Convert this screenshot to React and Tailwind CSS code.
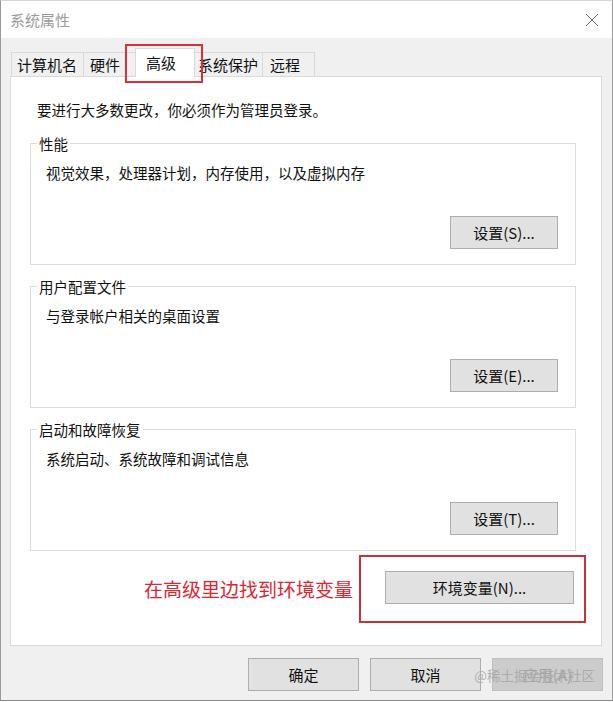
import React from 'react'

const tabs = [
  { label: '计算机名', w: 'w-[72px]', pl: 'pl-[5px]' },
  { label: '硬件', w: 'w-[54px]', pl: 'pl-[6px]' },
  { label: '高级', w: 'w-[60px]', pl: 'pl-[10px]', active: true },
  { label: '系统保护', w: 'w-[69px]', pl: 'pl-[4px]' },
  { label: '远程', w: 'w-[53px]', pl: 'pl-[7px]' },
]

const groups = [
  { title: '性能', text: '视觉效果，处理器计划，内存使用，以及虚拟内存', button: '设置(S)...' },
  { title: '用户配置文件', text: '与登录帐户相关的桌面设置', button: '设置(E)...' },
  { title: '启动和故障恢复', text: '系统启动、系统故障和调试信息', button: '设置(T)...' },
]

const WinButton = ({ children, className = '' }) => (
  <button className={`h-[33px] border border-[#adadad] bg-[#e1e1e1] text-[15px] text-[#111] leading-none ${className}`}>
    {children}
  </button>
)

const GroupBox = ({ title, text, button, className = '' }) => (
  <div className={`relative flex h-[122px] flex-col border border-[#dcdcdc] ${className}`}>
    <span className="absolute -top-[10px] left-[6px] bg-white px-[2px] text-[14.5px] leading-[20px] text-[#111]">
      {title}
    </span>
    <p className="pl-[15px] pt-[19px] text-[14.5px] leading-[20px] text-[#111]">{text}</p>
    <div className="flex-1" />
    <div className="flex justify-end pb-[15px] pr-[17px]">
      <WinButton className="w-[108px]">{button}</WinButton>
    </div>
  </div>
)

export default function App() {
  return (
    <div className="h-[702px] w-[613px] bg-white font-['Noto_Sans_CJK_SC',sans-serif]">
      <div className="flex h-[701px] flex-col border-x border-b border-t border-x-[#9a9a9a] border-b-[#8a8a8a] border-t-[#d6d6d6]">
        {/* Title bar */}
        <div className="flex h-[37px] items-center justify-between bg-white pl-[9px] pr-[13px]">
          <span className="text-[15px] leading-none text-[#9b9b9b]">系统属性</span>
          <svg width="14" height="14" viewBox="0 0 14 14" className="mt-[1px]">
            <path d="M1 1 L13 13 M13 1 L1 13" stroke="#666" strokeWidth="1" fill="none" />
          </svg>
        </div>

        {/* Body */}
        <div className="relative flex flex-1 flex-col bg-[#f0f0f0]">
          {/* Tabs */}
          <div className="ml-[10px] mt-[10px] flex h-[28px] items-end">
            {tabs.map((t) =>
              t.active ? (
                <div
                  key={t.label}
                  className={`relative z-10 -mx-[2px] -mb-[1px] h-[29px] ${t.w} ${t.pl} border-x border-t border-[#d9d9d9] bg-white pt-[5px] text-[15px] leading-[18px] text-[#111]`}
                >
                  {t.label}
                </div>
              ) : (
                <div
                  key={t.label}
                  className={`h-[24px] ${t.w} ${t.pl} border-l border-t border-[#d9d9d9] bg-[#f0f0f0] pt-[3px] text-[15px] leading-[18px] text-[#111] last:border-r`}
                >
                  {t.label}
                </div>
              )
            )}
          </div>
          {/* red mark round the active tab */}
          <div className="pointer-events-none absolute left-[124px] top-[6px] z-20 h-[39px] w-[78px] border-2 border-[#d4313b]" />

          {/* Tab panel */}
          <div className="ml-[9px] flex h-[570px] w-[592px] flex-col border border-[#d9d9d9] bg-white">
            <p className="pl-[26px] pt-[23px] text-[14.5px] leading-[20px] text-[#111]">
              要进行大多数更改，你必须作为管理员登录。
            </p>
            <div className="ml-[19px] mt-[23px] flex w-[546px] flex-col">
              {groups.map((g, i) => (
                <GroupBox key={g.title} {...g} className={i > 0 ? 'mt-[21px]' : ''} />
              ))}
            </div>

            {/* Annotation */}
            <div className="mt-[4px] flex items-center justify-end pr-[15px]">
              <span className="mr-[6px] text-[19px] leading-[24px] text-[#e0242f]">在高级里边找到环境变量</span>
              <div className="flex h-[68px] w-[227px] border-2 border-[#c8303a] pl-[24px] pt-[14px]">
                <WinButton className="w-[189px]">环境变量(N)...</WinButton>
              </div>
            </div>
          </div>

          {/* Dialog buttons */}
          <div className="mr-[9px] mt-[12px] flex justify-end gap-[11px]">
            <WinButton className="w-[111px]">确定</WinButton>
            <WinButton className="w-[111px]">取消</WinButton>
            <button className="h-[33px] w-[111px] border border-[#bfbfbf] bg-[#cccccc] text-[15px] leading-none text-[#a3a3a3]">
              应用(A)
            </button>
          </div>
          <span className="absolute bottom-[18px] right-[17px] text-[13.5px] leading-none text-[#a9a9a9] opacity-90">
            @稀土掘金技术社区
          </span>
        </div>
      </div>
    </div>
  )
}
